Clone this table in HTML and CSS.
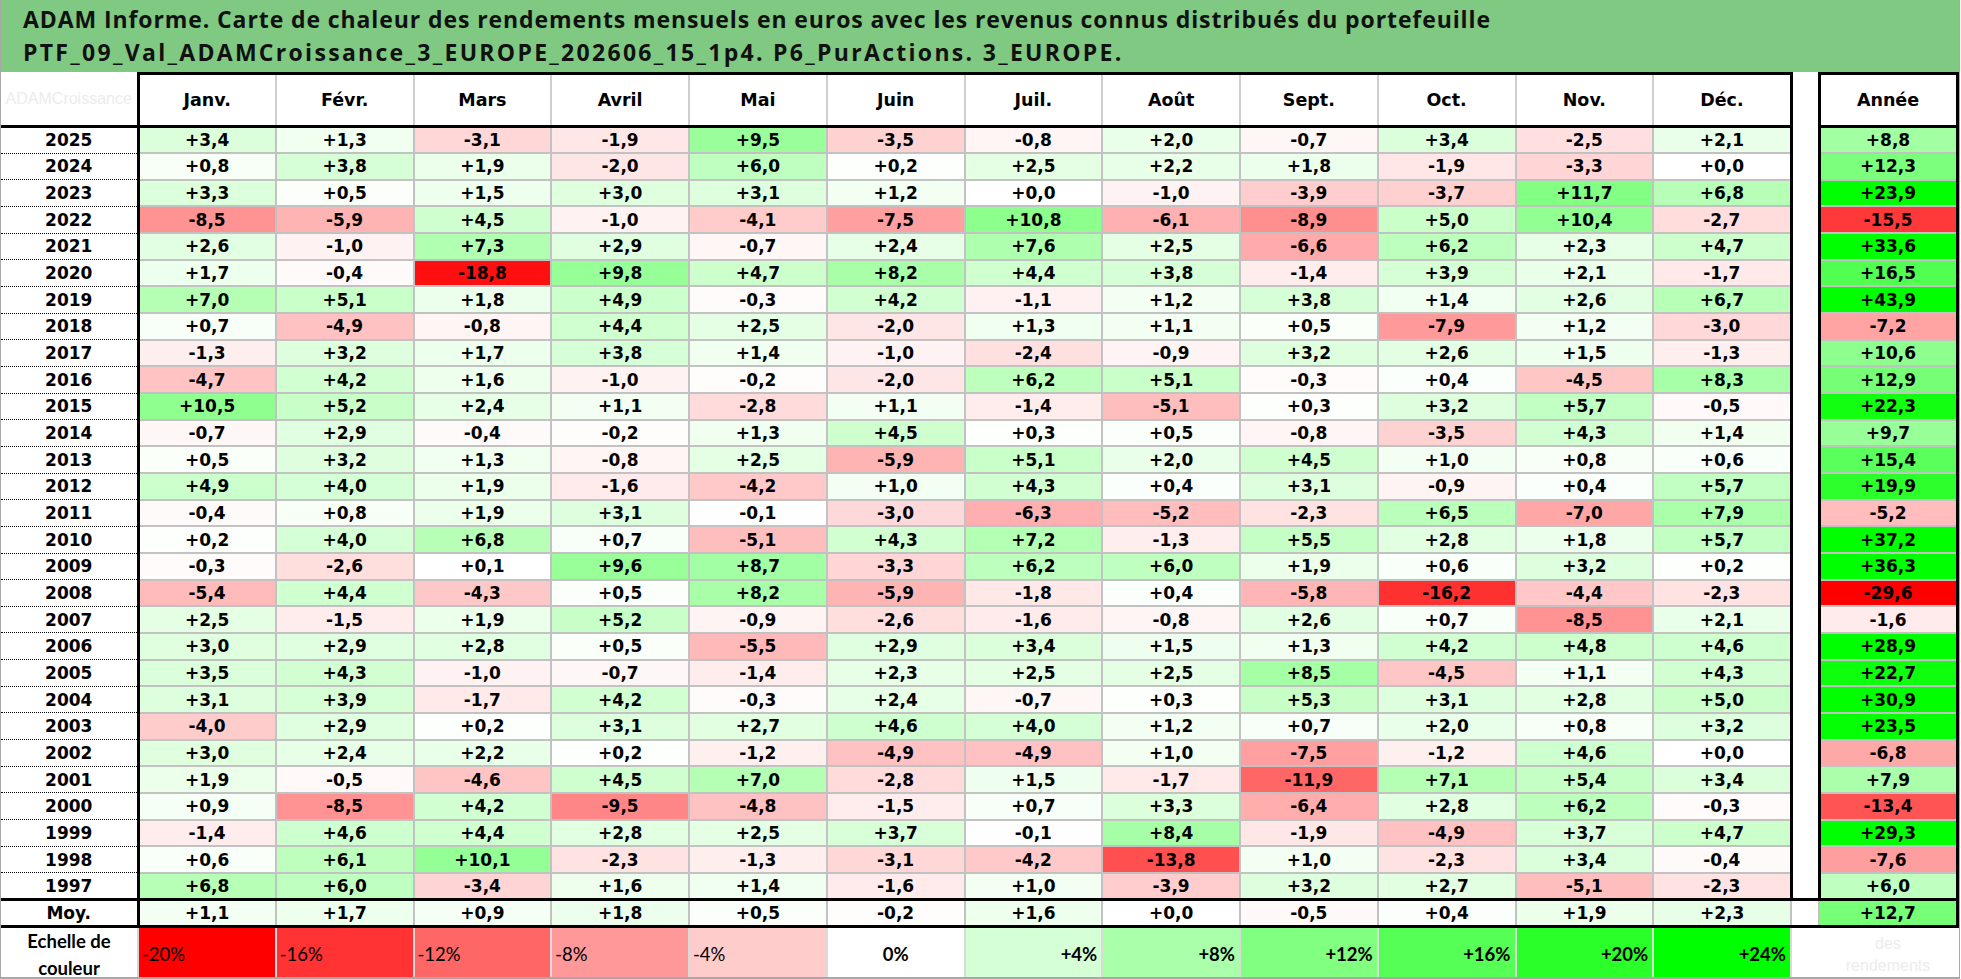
FILE: index.html
```html
<!DOCTYPE html>
<html lang="fr">
<head>
<meta charset="utf-8">
<title>ADAM Informe - Carte de chaleur</title>
<link rel="stylesheet" href="styles.css">
</head>
<body>
<div class="page">
  <header class="title">
    <div class="t1">ADAM Informe. Carte de chaleur des rendements mensuels en euros avec les revenus connus distribués du portefeuille</div>
    <div class="t2">PTF_09_Val_ADAMCroissance_3_EUROPE_202606_15_1p4. P6_PurActions. 3_EUROPE.</div>
  </header>
  <table class="heat">
    <colgroup>
      <col class="c-year">
      <col class="c-m"><col class="c-m"><col class="c-m"><col class="c-m"><col class="c-m"><col class="c-m">
      <col class="c-m"><col class="c-m"><col class="c-m"><col class="c-m"><col class="c-m"><col class="c-m">
      <col class="c-gap">
      <col class="c-tot">
    </colgroup>
    <thead>
      <tr>
        <th class="corner"><span class="ghost">ADAMCroissance</span></th>
        <th class="mh">Janv.</th><th class="mh">Févr.</th><th class="mh">Mars</th><th class="mh">Avril</th>
        <th class="mh">Mai</th><th class="mh">Juin</th><th class="mh">Juil.</th><th class="mh">Août</th>
        <th class="mh">Sept.</th><th class="mh">Oct.</th><th class="mh">Nov.</th><th class="mh dec">Déc.</th>
        <th class="gap"></th>
        <th class="tot">Année</th>
      </tr>
    </thead>
    <tbody>
      <tr><th class="yr">2025</th><td>+3,4</td><td>+1,3</td><td>-3,1</td><td>-1,9</td><td>+9,5</td><td>-3,5</td><td>-0,8</td><td>+2,0</td><td>-0,7</td><td>+3,4</td><td>-2,5</td><td class="dec">+2,1</td><td class="gap"></td><td class="tot">+8,8</td></tr>
      <tr><th class="yr">2024</th><td>+0,8</td><td>+3,8</td><td>+1,9</td><td>-2,0</td><td>+6,0</td><td>+0,2</td><td>+2,5</td><td>+2,2</td><td>+1,8</td><td>-1,9</td><td>-3,3</td><td class="dec">+0,0</td><td class="gap"></td><td class="tot">+12,3</td></tr>
      <tr><th class="yr">2023</th><td>+3,3</td><td>+0,5</td><td>+1,5</td><td>+3,0</td><td>+3,1</td><td>+1,2</td><td>+0,0</td><td>-1,0</td><td>-3,9</td><td>-3,7</td><td>+11,7</td><td class="dec">+6,8</td><td class="gap"></td><td class="tot">+23,9</td></tr>
      <tr><th class="yr">2022</th><td>-8,5</td><td>-5,9</td><td>+4,5</td><td>-1,0</td><td>-4,1</td><td>-7,5</td><td>+10,8</td><td>-6,1</td><td>-8,9</td><td>+5,0</td><td>+10,4</td><td class="dec">-2,7</td><td class="gap"></td><td class="tot">-15,5</td></tr>
      <tr><th class="yr">2021</th><td>+2,6</td><td>-1,0</td><td>+7,3</td><td>+2,9</td><td>-0,7</td><td>+2,4</td><td>+7,6</td><td>+2,5</td><td>-6,6</td><td>+6,2</td><td>+2,3</td><td class="dec">+4,7</td><td class="gap"></td><td class="tot">+33,6</td></tr>
      <tr><th class="yr">2020</th><td>+1,7</td><td>-0,4</td><td>-18,8</td><td>+9,8</td><td>+4,7</td><td>+8,2</td><td>+4,4</td><td>+3,8</td><td>-1,4</td><td>+3,9</td><td>+2,1</td><td class="dec">-1,7</td><td class="gap"></td><td class="tot">+16,5</td></tr>
      <tr><th class="yr">2019</th><td>+7,0</td><td>+5,1</td><td>+1,8</td><td>+4,9</td><td>-0,3</td><td>+4,2</td><td>-1,1</td><td>+1,2</td><td>+3,8</td><td>+1,4</td><td>+2,6</td><td class="dec">+6,7</td><td class="gap"></td><td class="tot">+43,9</td></tr>
      <tr><th class="yr">2018</th><td>+0,7</td><td>-4,9</td><td>-0,8</td><td>+4,4</td><td>+2,5</td><td>-2,0</td><td>+1,3</td><td>+1,1</td><td>+0,5</td><td>-7,9</td><td>+1,2</td><td class="dec">-3,0</td><td class="gap"></td><td class="tot">-7,2</td></tr>
      <tr><th class="yr">2017</th><td>-1,3</td><td>+3,2</td><td>+1,7</td><td>+3,8</td><td>+1,4</td><td>-1,0</td><td>-2,4</td><td>-0,9</td><td>+3,2</td><td>+2,6</td><td>+1,5</td><td class="dec">-1,3</td><td class="gap"></td><td class="tot">+10,6</td></tr>
      <tr><th class="yr">2016</th><td>-4,7</td><td>+4,2</td><td>+1,6</td><td>-1,0</td><td>-0,2</td><td>-2,0</td><td>+6,2</td><td>+5,1</td><td>-0,3</td><td>+0,4</td><td>-4,5</td><td class="dec">+8,3</td><td class="gap"></td><td class="tot">+12,9</td></tr>
      <tr><th class="yr">2015</th><td>+10,5</td><td>+5,2</td><td>+2,4</td><td>+1,1</td><td>-2,8</td><td>+1,1</td><td>-1,4</td><td>-5,1</td><td>+0,3</td><td>+3,2</td><td>+5,7</td><td class="dec">-0,5</td><td class="gap"></td><td class="tot">+22,3</td></tr>
      <tr><th class="yr">2014</th><td>-0,7</td><td>+2,9</td><td>-0,4</td><td>-0,2</td><td>+1,3</td><td>+4,5</td><td>+0,3</td><td>+0,5</td><td>-0,8</td><td>-3,5</td><td>+4,3</td><td class="dec">+1,4</td><td class="gap"></td><td class="tot">+9,7</td></tr>
      <tr><th class="yr">2013</th><td>+0,5</td><td>+3,2</td><td>+1,3</td><td>-0,8</td><td>+2,5</td><td>-5,9</td><td>+5,1</td><td>+2,0</td><td>+4,5</td><td>+1,0</td><td>+0,8</td><td class="dec">+0,6</td><td class="gap"></td><td class="tot">+15,4</td></tr>
      <tr><th class="yr">2012</th><td>+4,9</td><td>+4,0</td><td>+1,9</td><td>-1,6</td><td>-4,2</td><td>+1,0</td><td>+4,3</td><td>+0,4</td><td>+3,1</td><td>-0,9</td><td>+0,4</td><td class="dec">+5,7</td><td class="gap"></td><td class="tot">+19,9</td></tr>
      <tr><th class="yr">2011</th><td>-0,4</td><td>+0,8</td><td>+1,9</td><td>+3,1</td><td>-0,1</td><td>-3,0</td><td>-6,3</td><td>-5,2</td><td>-2,3</td><td>+6,5</td><td>-7,0</td><td class="dec">+7,9</td><td class="gap"></td><td class="tot">-5,2</td></tr>
      <tr><th class="yr">2010</th><td>+0,2</td><td>+4,0</td><td>+6,8</td><td>+0,7</td><td>-5,1</td><td>+4,3</td><td>+7,2</td><td>-1,3</td><td>+5,5</td><td>+2,8</td><td>+1,8</td><td class="dec">+5,7</td><td class="gap"></td><td class="tot">+37,2</td></tr>
      <tr><th class="yr">2009</th><td>-0,3</td><td>-2,6</td><td>+0,1</td><td>+9,6</td><td>+8,7</td><td>-3,3</td><td>+6,2</td><td>+6,0</td><td>+1,9</td><td>+0,6</td><td>+3,2</td><td class="dec">+0,2</td><td class="gap"></td><td class="tot">+36,3</td></tr>
      <tr><th class="yr">2008</th><td>-5,4</td><td>+4,4</td><td>-4,3</td><td>+0,5</td><td>+8,2</td><td>-5,9</td><td>-1,8</td><td>+0,4</td><td>-5,8</td><td>-16,2</td><td>-4,4</td><td class="dec">-2,3</td><td class="gap"></td><td class="tot">-29,6</td></tr>
      <tr><th class="yr">2007</th><td>+2,5</td><td>-1,5</td><td>+1,9</td><td>+5,2</td><td>-0,9</td><td>-2,6</td><td>-1,6</td><td>-0,8</td><td>+2,6</td><td>+0,7</td><td>-8,5</td><td class="dec">+2,1</td><td class="gap"></td><td class="tot">-1,6</td></tr>
      <tr><th class="yr">2006</th><td>+3,0</td><td>+2,9</td><td>+2,8</td><td>+0,5</td><td>-5,5</td><td>+2,9</td><td>+3,4</td><td>+1,5</td><td>+1,3</td><td>+4,2</td><td>+4,8</td><td class="dec">+4,6</td><td class="gap"></td><td class="tot">+28,9</td></tr>
      <tr><th class="yr">2005</th><td>+3,5</td><td>+4,3</td><td>-1,0</td><td>-0,7</td><td>-1,4</td><td>+2,3</td><td>+2,5</td><td>+2,5</td><td>+8,5</td><td>-4,5</td><td>+1,1</td><td class="dec">+4,3</td><td class="gap"></td><td class="tot">+22,7</td></tr>
      <tr><th class="yr">2004</th><td>+3,1</td><td>+3,9</td><td>-1,7</td><td>+4,2</td><td>-0,3</td><td>+2,4</td><td>-0,7</td><td>+0,3</td><td>+5,3</td><td>+3,1</td><td>+2,8</td><td class="dec">+5,0</td><td class="gap"></td><td class="tot">+30,9</td></tr>
      <tr><th class="yr">2003</th><td>-4,0</td><td>+2,9</td><td>+0,2</td><td>+3,1</td><td>+2,7</td><td>+4,6</td><td>+4,0</td><td>+1,2</td><td>+0,7</td><td>+2,0</td><td>+0,8</td><td class="dec">+3,2</td><td class="gap"></td><td class="tot">+23,5</td></tr>
      <tr><th class="yr">2002</th><td>+3,0</td><td>+2,4</td><td>+2,2</td><td>+0,2</td><td>-1,2</td><td>-4,9</td><td>-4,9</td><td>+1,0</td><td>-7,5</td><td>-1,2</td><td>+4,6</td><td class="dec">+0,0</td><td class="gap"></td><td class="tot">-6,8</td></tr>
      <tr><th class="yr">2001</th><td>+1,9</td><td>-0,5</td><td>-4,6</td><td>+4,5</td><td>+7,0</td><td>-2,8</td><td>+1,5</td><td>-1,7</td><td>-11,9</td><td>+7,1</td><td>+5,4</td><td class="dec">+3,4</td><td class="gap"></td><td class="tot">+7,9</td></tr>
      <tr><th class="yr">2000</th><td>+0,9</td><td>-8,5</td><td>+4,2</td><td>-9,5</td><td>-4,8</td><td>-1,5</td><td>+0,7</td><td>+3,3</td><td>-6,4</td><td>+2,8</td><td>+6,2</td><td class="dec">-0,3</td><td class="gap"></td><td class="tot">-13,4</td></tr>
      <tr><th class="yr">1999</th><td>-1,4</td><td>+4,6</td><td>+4,4</td><td>+2,8</td><td>+2,5</td><td>+3,7</td><td>-0,1</td><td>+8,4</td><td>-1,9</td><td>-4,9</td><td>+3,7</td><td class="dec">+4,7</td><td class="gap"></td><td class="tot">+29,3</td></tr>
      <tr><th class="yr">1998</th><td>+0,6</td><td>+6,1</td><td>+10,1</td><td>-2,3</td><td>-1,3</td><td>-3,1</td><td>-4,2</td><td>-13,8</td><td>+1,0</td><td>-2,3</td><td>+3,4</td><td class="dec">-0,4</td><td class="gap"></td><td class="tot">-7,6</td></tr>
      <tr><th class="yr">1997</th><td>+6,8</td><td>+6,0</td><td>-3,4</td><td>+1,6</td><td>+1,4</td><td>-1,6</td><td>+1,0</td><td>-3,9</td><td>+3,2</td><td>+2,7</td><td>-5,1</td><td class="dec">-2,3</td><td class="gap"></td><td class="tot">+6,0</td></tr>
    </tbody>
    <tfoot>
      <tr class="moy"><th class="yr">Moy.</th><td>+1,1</td><td>+1,7</td><td>+0,9</td><td>+1,8</td><td>+0,5</td><td>-0,2</td><td>+1,6</td><td>+0,0</td><td>-0,5</td><td>+0,4</td><td>+1,9</td><td class="dec">+2,3</td><td class="gap"></td><td class="tot">+12,7</td></tr>
      <tr class="legend">
        <th class="yr">Echelle de<br>couleur</th>
        <td class="neg">-20%</td><td class="neg">-16%</td><td class="neg">-12%</td><td class="neg">-8%</td><td class="neg">-4%</td>
        <td class="zero">0%</td>
        <td class="pos">+4%</td><td class="pos">+8%</td><td class="pos">+12%</td><td class="pos">+16%</td><td class="pos">+20%</td><td class="pos">+24%</td>
        <td class="gap"></td>
        <td class="note"><span class="ghost">des<br>rendements</span></td>
      </tr>
    </tfoot>
  </table>
</div>
<script src="script.js"></script>
</body>
</html>
```

FILE: styles.css
```css
* { box-sizing: border-box; }

html, body {
  margin: 0;
  padding: 0;
  background: #ffffff;
}

body {
  width: 1961px;
  height: 979px;
  overflow: hidden;
}

.page {
  width: 1960px;
  height: 979px;
  border-left: 1px solid #a8a8a8;
  border-right: 1px solid #a8a8a8;
  border-bottom: 2px solid #a8a8a8;
  overflow: hidden;
}

.title {
  background: #80c982;
  height: 72px;
  padding: 3px 0 0 22px;
  font-family: "Open Sans", "DejaVu Sans", sans-serif;
  font-weight: 700;
  font-size: 23px;
  line-height: 33px;
  color: #111111;
  white-space: nowrap;
}

.title .t1 { letter-spacing: 0.9px; }
.title .t2 { letter-spacing: 2.3px; }

.heat {
  border-collapse: collapse;
  table-layout: fixed;
  width: 1956px;
  font-family: "DejaVu Sans", Verdana, sans-serif;
  font-weight: bold;
  font-size: 17px;
  color: #000000;
}

.c-year { width: 137px; }
.c-m { width: 137.75px; }
.c-gap { width: 28px; }
.c-tot { width: 138px; }

.heat th,
.heat td {
  padding: 0;
  text-align: center;
  vertical-align: middle;
  white-space: nowrap;
  overflow: hidden;
}

/* header row */
.heat thead th {
  height: 53px;
  font-size: 17.5px;
}

.heat thead th.corner {
  border-bottom: 3px solid #000;
  border-right: 3px solid #000;
  font-family: "Liberation Sans", Arial, sans-serif;
  font-weight: normal;
  font-size: 16px;
}

.heat thead th.mh {
  border-top: 3px solid #000;
  border-bottom: 3px solid #000;
  border-left: 2px solid #cfcfcf;
  border-right: 2px solid #cfcfcf;
}

.heat thead th.dec { border-right: 3px solid #000; }

.heat th.gap,
.heat td.gap {
  border: none;
  background: #ffffff;
}

.heat thead th.tot {
  border: 3px solid #000;
}

/* body rows */
.heat tbody tr,
.heat tfoot tr.moy {
  height: 26.67px;
}

.heat th.yr {
  border-top: 1px dotted #000;
  border-bottom: 1px dotted #000;
  border-right: 3px solid #000;
  font-size: 17px;
}

.heat tbody td {
  border: 2px solid #c2c2c2;
}

.heat tbody td.dec { border-right: 3px solid #000; }

.heat tbody td.tot {
  border-left: 3px solid #000;
  border-right: 3px solid #000;
}

/* average row */
.heat tr.moy th,
.heat tr.moy td {
  border-top: 3px solid #000;
  border-bottom: 3px solid #000;
}

.heat tr.moy td {
  border-left: 2px solid #c2c2c2;
  border-right: 2px solid #c2c2c2;
}

.heat tr.moy td.gap {
  border-left: 2px solid #c2c2c2;
  border-right: 2px solid #c2c2c2;
}

.heat tr.moy td.tot {
  border-left: 2px solid #c2c2c2;
  border-right: 3px solid #000;
}

/* colour scale row */
.heat tr.legend {
  height: 52px;
}

.heat tr.legend th.yr {
  border-top: 3px solid #000;
  border-bottom: none;
  border-right: 2px solid #d6d6d6;
  font-family: "Lato", "Open Sans", sans-serif;
  font-weight: 700;
  font-size: 18.5px;
  line-height: 27px;
}

.heat tr.legend td {
  border: 2px solid #dadada;
  border-top: 3px solid #000;
  font-family: "Lato", "Open Sans", sans-serif;
  font-size: 18.5px;
}

.heat tr.legend td.neg {
  text-align: left;
  padding-left: 3px;
  font-weight: 400;
}

.heat tr.legend td.zero {
  text-align: center;
  font-weight: 700;
}

.heat tr.legend td.pos {
  text-align: right;
  padding-right: 4px;
  font-weight: 700;
}

.heat tr.legend td.gap {
  border-top: 3px solid #000;
  border-left: 2px solid #dadada;
  border-right: none;
  border-bottom: none;
}

.heat tr.legend td.note {
  border-top: 3px solid #000;
  border-left: none;
  border-right: none;
  border-bottom: none;
  font-family: "Liberation Sans", Arial, sans-serif;
  font-weight: normal;
  font-size: 16px;
  line-height: 22px;
}

.ghost {
  color: #ececec;
}
```

FILE: script.js
```js
(function () {
  function colour(v) {
    var t, c;
    if (v < 0) {
      t = Math.min(1, -v / 20);
      c = Math.round(255 * (1 - t));
      return "rgb(255," + c + "," + c + ")";
    }
    t = Math.min(1, v / 24);
    c = Math.round(255 * (1 - t));
    return "rgb(" + c + ",255," + c + ")";
  }

  var cells = document.querySelectorAll(
    ".heat tbody td:not(.gap), .heat tr.moy td:not(.gap), .heat tr.legend td.neg, .heat tr.legend td.zero, .heat tr.legend td.pos"
  );
  cells.forEach(function (cell) {
    var v = parseFloat(cell.textContent.replace(",", ".").replace("%", ""));
    if (!isNaN(v)) {
      cell.style.backgroundColor = colour(v);
    }
  });
})();
```
